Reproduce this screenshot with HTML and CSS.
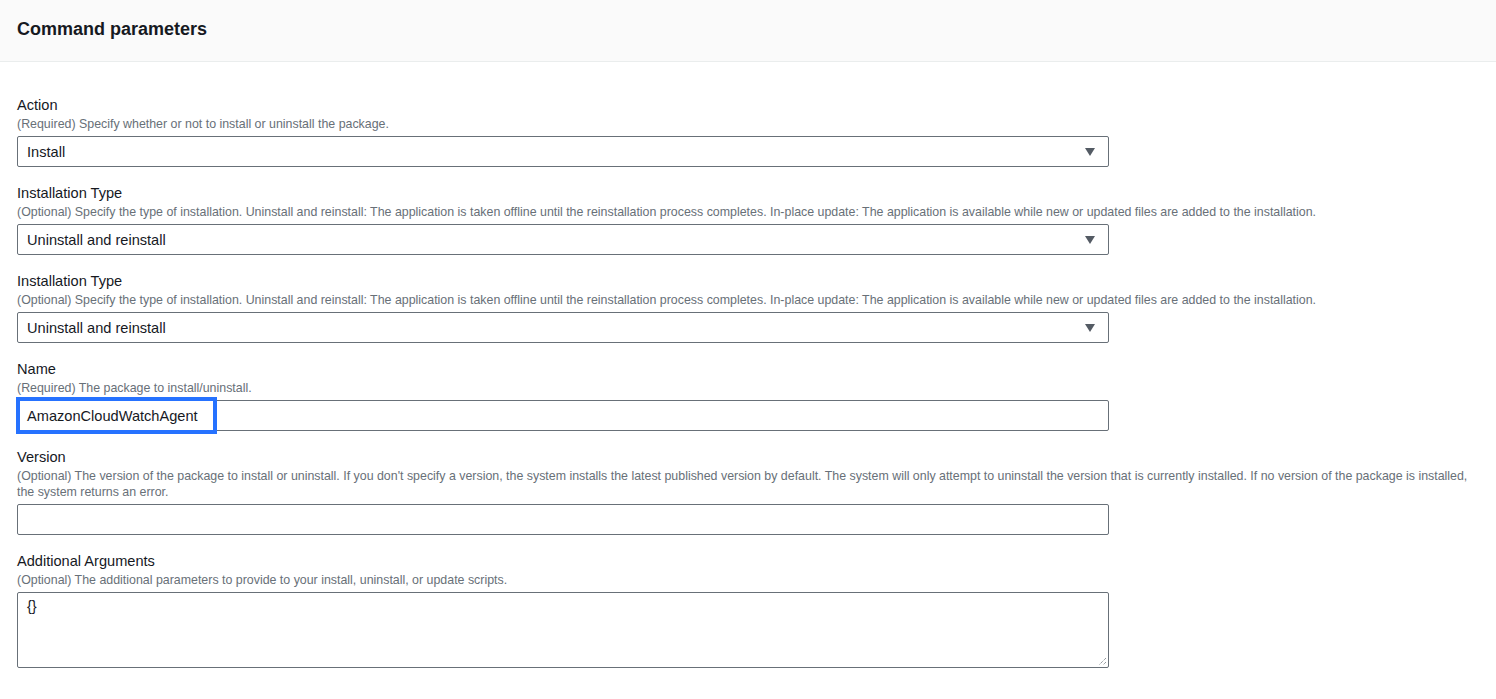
FILE: index.html
```html
<!DOCTYPE html>
<html lang="en">
<head>
  <meta charset="UTF-8">
  <meta name="viewport" content="width=device-width, initial-scale=1.0">
  <title>Command parameters</title>
  <link rel="stylesheet" href="styles.css">
</head>
<body>
  <div class="panel">
    <div class="panel_header">
      <h2>Command parameters</h2>
    </div>
    <div class="panel_body">
      <div class="field">
        <label class="label">Action</label>
        <div class="desc">(Required) Specify whether or not to install or uninstall the package.</div>
        <div class="select">
          <span>Install</span>
          <span class="caret"></span>
        </div>
      </div>
      <div class="field">
        <label class="label">Installation Type</label>
        <div class="desc">(Optional) Specify the type of installation. Uninstall and reinstall: The application is taken offline until the reinstallation process completes. In-place update: The application is available while new or updated files are added to the installation.</div>
        <div class="select">
          <span>Uninstall and reinstall</span>
          <span class="caret"></span>
        </div>
      </div>
      <div class="field">
        <label class="label">Installation Type</label>
        <div class="desc">(Optional) Specify the type of installation. Uninstall and reinstall: The application is taken offline until the reinstallation process completes. In-place update: The application is available while new or updated files are added to the installation.</div>
        <div class="select">
          <span>Uninstall and reinstall</span>
          <span class="caret"></span>
        </div>
      </div>
      <div class="field">
        <label class="label">Name</label>
        <div class="desc">(Required) The package to install/uninstall.</div>
        <div class="input_wrap">
          <div class="input">AmazonCloudWatchAgent</div>
          <div class="highlight"></div>
        </div>
      </div>
      <div class="field">
        <label class="label">Version</label>
        <div class="desc">(Optional) The version of the package to install or uninstall. If you don't specify a version, the system installs the latest published version by default. The system will only attempt to uninstall the version that is currently installed. If no version of the package is installed, the system returns an error.</div>
        <div class="input"></div>
      </div>
      <div class="field">
        <label class="label">Additional Arguments</label>
        <div class="desc">(Optional) The additional parameters to provide to your install, uninstall, or update scripts.</div>
        <div class="textarea">{}
          <svg class="grip" width="10" height="10" viewBox="0 0 10 10">
            <path d="M9 2 L2 9 M9 6 L6 9" stroke="#687078" stroke-width="1" stroke-dasharray="1 1"/>
          </svg>
        </div>
      </div>
    </div>
  </div>
</body>
</html>
```

FILE: styles.css
```css
body {
  margin: 0;
  background-color: #fff;
  font-family: 'Liberation Sans', Arial, sans-serif;
  color: #16191f;
}
.panel_header {
  height: 62px;
  box-sizing: border-box;
  padding: 0 17px;
  display: flex;
  align-items: center;
  background-color: #fafafa;
  border-bottom: 1px solid #eaeded;
}
.panel_header h2 {
  margin: 0 0 3px;
  font-size: 18px;
  font-weight: bold;
}
.panel_body {
  padding: 33px 17px 0;
  width: 1462px;
}
.field {
  margin-bottom: 16px;
}
.label {
  display: block;
  font-size: 14.6px;
  line-height: 21px;
}
.desc {
  font-size: 12.4px;
  line-height: 16px;
  color: #687078;
  margin-bottom: 4px;
}
.select,
.input,
.textarea {
  width: 1092px;
  height: 31px;
  box-sizing: border-box;
  border: 1px solid #687078;
  border-radius: 2px;
  padding: 0 9px;
  font-size: 14.6px;
  display: flex;
  align-items: center;
  justify-content: space-between;
}
.caret {
  width: 0;
  height: 0;
  margin-right: 4px;
  border-left: 5px solid transparent;
  border-right: 5px solid transparent;
  border-top: 8px solid #545b64;
}
.input_wrap {
  position: relative;
}
.highlight {
  position: absolute;
  left: -1px;
  top: -3px;
  width: 201px;
  height: 37px;
  box-sizing: border-box;
  border: 4px solid #2672ff;
}
.textarea {
  position: relative;
  height: 76px;
  align-items: flex-start;
  padding-top: 5px;
}
.grip {
  position: absolute;
  right: 1px;
  bottom: 1px;
}
```
